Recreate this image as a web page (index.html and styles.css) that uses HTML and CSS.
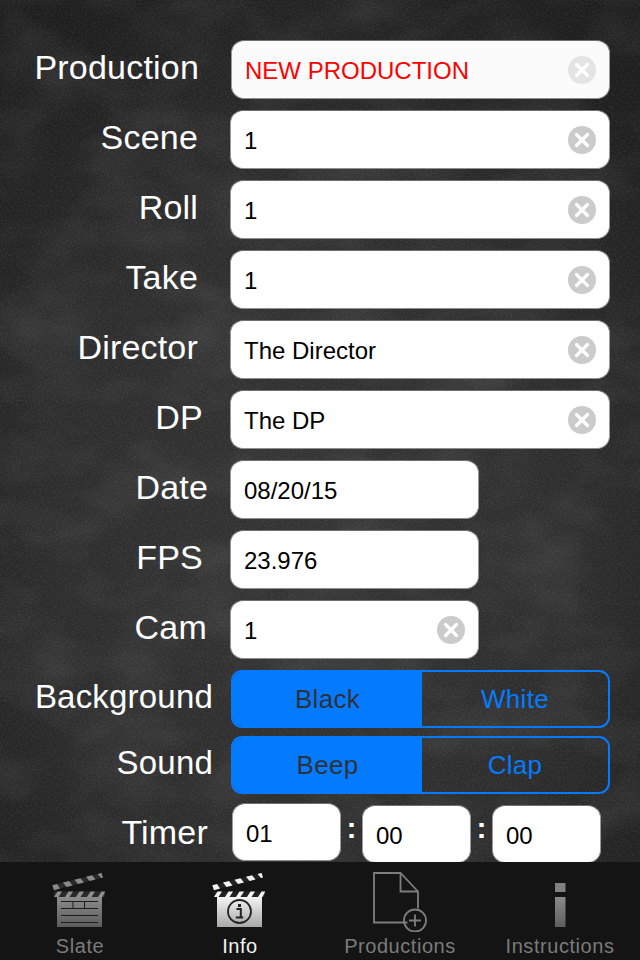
FILE: index.html
```html
<!DOCTYPE html>
<html lang="en">
<head>
<meta charset="utf-8">
<title>Slate Info</title>
<link rel="stylesheet" href="styles.css">
</head>
<body>
<div class="screen">
  <svg class="board" width="640" height="862" aria-hidden="true">
    <defs>
      <radialGradient id="vig" cx="50%" cy="62%" r="70%">
        <stop offset="0" stop-color="#343434"/>
        <stop offset="0.6" stop-color="#2d2d2d"/>
        <stop offset="1" stop-color="#1e1e1e"/>
      </radialGradient>
      <filter id="grain" x="0" y="0" width="100%" height="100%">
        <feTurbulence type="fractalNoise" baseFrequency="0.55" numOctaves="3" seed="7"/>
        <feColorMatrix values="0 0 0 0 1  0 0 0 0 1  0 0 0 0 1  0.9 0 0 0 -0.36"/>
      </filter>
      <filter id="smudge" x="0" y="0" width="100%" height="100%">
        <feTurbulence type="fractalNoise" baseFrequency="0.012 0.02" numOctaves="3" seed="3"/>
        <feColorMatrix values="0 0 0 0 1  0 0 0 0 1  0 0 0 0 1  0.7 0 0 0 -0.28"/>
      </filter>
    </defs>
    <rect width="640" height="862" fill="url(#vig)"/>
    <rect width="640" height="862" filter="url(#smudge)" opacity="0.22"/>
    <rect width="640" height="862" filter="url(#grain)" opacity="0.18"/>
  </svg>

  <main class="form">
    <div class="row">
      <label class="label pad-199">Production</label>
      <div class="field field-prod">
        <span class="value value-red">NEW PRODUCTION</span>
        <span class="clear clear-pale"><svg viewBox="0 0 28 28" width="28" height="28"><path d="M8.5 8.5l11 11M19.500 8.500l-11 11"/></svg></span>
      </div>
    </div>
    <div class="row">
      <label class="label pad-198">Scene</label>
      <div class="field"><span class="value">1</span><span class="clear"><svg viewBox="0 0 28 28" width="28" height="28"><path d="M8.5 8.5l11 11M19.500 8.500l-11 11"/></svg></span></div>
    </div>
    <div class="row">
      <label class="label pad-198">Roll</label>
      <div class="field"><span class="value">1</span><span class="clear"><svg viewBox="0 0 28 28" width="28" height="28"><path d="M8.5 8.5l11 11M19.500 8.500l-11 11"/></svg></span></div>
    </div>
    <div class="row">
      <label class="label pad-198">Take</label>
      <div class="field"><span class="value">1</span><span class="clear"><svg viewBox="0 0 28 28" width="28" height="28"><path d="M8.5 8.5l11 11M19.500 8.500l-11 11"/></svg></span></div>
    </div>
    <div class="row">
      <label class="label pad-198">Director</label>
      <div class="field"><span class="value">The Director</span><span class="clear"><svg viewBox="0 0 28 28" width="28" height="28"><path d="M8.5 8.5l11 11M19.500 8.500l-11 11"/></svg></span></div>
    </div>
    <div class="row">
      <label class="label pad-203">DP</label>
      <div class="field"><span class="value">The DP</span><span class="clear"><svg viewBox="0 0 28 28" width="28" height="28"><path d="M8.5 8.5l11 11M19.500 8.500l-11 11"/></svg></span></div>
    </div>
    <div class="row">
      <label class="label pad-208">Date</label>
      <div class="field field-short"><span class="value">08/20/15</span></div>
    </div>
    <div class="row">
      <label class="label pad-203">FPS</label>
      <div class="field field-short"><span class="value">23.976</span></div>
    </div>
    <div class="row">
      <label class="label pad-207">Cam</label>
      <div class="field field-short"><span class="value">1</span><span class="clear"><svg viewBox="0 0 28 28" width="28" height="28"><path d="M8.5 8.5l11 11M19.500 8.500l-11 11"/></svg></span></div>
    </div>
    <div class="row row-seg">
      <label class="label label-seg pad-213">Background</label>
      <div class="segment">
        <span class="seg seg-on">Black</span>
        <span class="seg">White</span>
      </div>
    </div>
    <div class="row row-seg">
      <label class="label label-seg pad-213">Sound</label>
      <div class="segment">
        <span class="seg seg-on">Beep</span>
        <span class="seg">Clap</span>
      </div>
    </div>
    <div class="row row-timer">
      <label class="label label-timer pad-208">Timer</label>
      <div class="timer">
        <div class="field field-time field-time-first"><span class="value">01</span></div>
        <span class="colon">:</span>
        <div class="field field-time"><span class="value">00</span></div>
        <span class="colon">:</span>
        <div class="field field-time"><span class="value">00</span></div>
      </div>
    </div>
  </main>

  <nav class="tabs">
    <div class="tab">
      <svg class="tab-icon" viewBox="0 0 70 66" width="70" height="66" aria-hidden="true">
        <defs>
          <linearGradient id="slateBody" x1="0" y1="0" x2="0" y2="1"><stop offset="0" stop-color="#8c8c8c"/><stop offset="1" stop-color="#5c5c5c"/></linearGradient>
          <linearGradient id="slateTop" x1="0" y1="0" x2="0" y2="1"><stop offset="0" stop-color="#9a9a9a"/><stop offset="1" stop-color="#777"/></linearGradient>
        </defs>
        <polygon points="7.300,19.200 56.600,6.900 58,11.500 9,24.200" fill="#2a2a2a"/>
        <g fill="#8a8a8a">
          <polygon points="7.300,19.200 12,18 15,22.600 9,24.200"/>
          <polygon points="18,16.500 24,15 27.500,19.500 21.500,21"/>
          <polygon points="29.500,13.700 35.500,12.200 39,16.600 33,18"/>
          <polygon points="41,10.800 47,9.300 50.500,13.500 44.500,15"/>
          <polygon points="52.500,8 56.600,6.900 58,11.500 56,12"/>
        </g>
        <rect x="9" y="25.500" width="51" height="5.500" fill="#2a2a2a"/>
        <g fill="#8f8f8f">
          <polygon points="9,31 12.500,25.500 17,25.500 13.500,31"/>
          <polygon points="20,31 23.500,25.500 28,25.500 24.500,31"/>
          <polygon points="31,31 34.500,25.500 39,25.500 35.500,31"/>
          <polygon points="42,31 45.500,25.500 50,25.500 46.500,31"/>
          <polygon points="53,31 56.500,25.500 60,25.500 60,26 57.500,31"/>
        </g>
        <rect x="12" y="31" width="45" height="30" fill="url(#slateBody)"/>
        <path d="M16 35.500h37M16 42.500h37M16 49.500h37M16 56.500h37M28 35.500v7M39.500 35.500v7" stroke="#1c1c1c" stroke-width="1" fill="none"/>
      </svg>
      <span class="tab-label">Slate</span>
    </div>
    <div class="tab tab-on">
      <svg class="tab-icon" viewBox="0 0 70 66" width="70" height="66" aria-hidden="true">
        <defs>
          <linearGradient id="infoBody" x1="0" y1="0" x2="0" y2="1"><stop offset="0" stop-color="#f4f4f4"/><stop offset="1" stop-color="#a8a8a8"/></linearGradient>
        </defs>
        <polygon points="7.300,19.200 56.600,6.900 58,11.500 9,24.200" fill="#222"/>
        <g fill="#f2f2f2">
          <polygon points="7.300,19.200 12,18 15,22.600 9,24.200"/>
          <polygon points="18,16.500 24,15 27.500,19.500 21.500,21"/>
          <polygon points="29.500,13.700 35.500,12.200 39,16.600 33,18"/>
          <polygon points="41,10.800 47,9.300 50.500,13.500 44.500,15"/>
          <polygon points="52.500,8 56.600,6.900 58,11.500 56,12"/>
        </g>
        <rect x="9" y="25.500" width="51" height="5.500" fill="#222"/>
        <g fill="#f5f5f5">
          <polygon points="9,31 12.500,25.500 17,25.500 13.500,31"/>
          <polygon points="20,31 23.500,25.500 28,25.500 24.500,31"/>
          <polygon points="31,31 34.500,25.500 39,25.500 35.500,31"/>
          <polygon points="42,31 45.500,25.500 50,25.500 46.500,31"/>
          <polygon points="53,31 56.500,25.500 60,25.500 60,26 57.500,31"/>
        </g>
        <rect x="12" y="31" width="45" height="30" fill="url(#infoBody)"/>
        <circle cx="34.500" cy="45.500" r="11.500" fill="none" stroke="#222" stroke-width="1.800"/>
        <path d="M31.500 43h4.300v8.500M30.800 51.500h7.400" fill="none" stroke="#222" stroke-width="2"/>
        <rect x="33" y="38" width="3" height="3" fill="#222"/>
      </svg>
      <span class="tab-label">Info</span>
    </div>
    <div class="tab">
      <svg class="tab-icon" viewBox="0 0 70 66" width="70" height="66" aria-hidden="true">
        <path d="M42.500 56.500H9V7h26.500L53 25.500v17" fill="none" stroke="#7d7d7d" stroke-width="1.800"/>
        <path d="M35.500 7v18.500H53" fill="none" stroke="#7d7d7d" stroke-width="1.800"/>
        <circle cx="50" cy="54.500" r="11" fill="none" stroke="#7d7d7d" stroke-width="1.800"/>
        <path d="M44 54.500h12M50 48.500v12" fill="none" stroke="#7d7d7d" stroke-width="1.800"/>
      </svg>
      <span class="tab-label">Productions</span>
    </div>
    <div class="tab">
      <svg class="tab-icon" viewBox="0 0 70 66" width="70" height="66" aria-hidden="true">
        <defs>
          <linearGradient id="iBar" x1="0" y1="0" x2="0" y2="1"><stop offset="0" stop-color="#8a8a8a"/><stop offset="1" stop-color="#5e5e5e"/></linearGradient>
        </defs>
        <rect x="30" y="17" width="10.500" height="9" fill="#808080"/>
        <rect x="30" y="31" width="10.500" height="30" fill="url(#iBar)"/>
      </svg>
      <span class="tab-label">Instructions</span>
    </div>
  </nav>
</div>
</body>
</html>
```

FILE: styles.css
```css
* {
  box-sizing: border-box;
}

html,
body {
  margin: 0;
  padding: 0;
}

body {
  background: #141414;
  font-family: "Liberation Sans", Arial, sans-serif;
}

.screen {
  position: relative;
  width: 640px;
  height: 960px;
  overflow: hidden;
  display: flex;
  flex-direction: column;
}

.board {
  position: absolute;
  left: 0;
  top: 0;
}

.form {
  position: relative;
  height: 862px;
  padding-top: 40px;
  overflow: hidden;
  display: flex;
  flex-direction: column;
  flex: none;
}

.row {
  display: flex;
  height: 58px;
  margin-bottom: 12px;
  flex: none;
}

.row-seg {
  margin-bottom: 8px;
}

.row-timer {
  height: 60px;
  margin-bottom: 0;
  margin-top: 1px;
}

.label {
  width: 230px;
  flex: none;
  text-align: right;
  color: #fff;
  font-size: 34px;
  line-height: 54px;
  letter-spacing: 0.2px;
}

.label-seg {
  font-size: 33px;
  line-height: 53px;
}

.label-timer {
  line-height: 58px;
}

.pad-198 { padding-right: 32px; }
.pad-199 { padding-right: 31px; }
.pad-203 { padding-right: 27px; }
.pad-207 { padding-right: 23px; }
.pad-208 { padding-right: 22px; }
.pad-213 { padding-right: 17px; }

.field {
  width: 380px;
  height: 59px;
  display: flex;
  align-items: center;
  justify-content: space-between;
  padding: 0 13px;
  background: #fff;
  border-radius: 13px;
  border: 1px solid #8a8a8a;
  border-width: 1px 1px 1px 1px;
  border-color: #6f6f6f #9a9a9a #8f8f8f #9a9a9a;
}

.field-prod {
  width: 379px;
  margin-left: 1px;
  background: #fbfbfb;
}

.field-short {
  width: 249px;
}

.value {
  font-size: 24px;
  line-height: 28px;
  color: #000;
  padding-top: 3px;
}

.value-red {
  color: #fe0000;
}

.clear {
  width: 28px;
  height: 28px;
  border-radius: 50%;
  background: #cbcbcb;
  flex: none;
  margin-right: 0;
}

.clear-pale {
  background: #e4e4e4;
}

.clear svg {
  display: block;
}

.clear path {
  fill: none;
  stroke: #fff;
  stroke-width: 3.200;
  stroke-linecap: round;
}

.segment {
  width: 379px;
  height: 58px;
  margin-left: 1px;
  display: flex;
  border: 2px solid #047bfe;
  border-radius: 11px;
  overflow: hidden;
}

.seg {
  flex: 1;
  display: flex;
  align-items: center;
  justify-content: center;
  color: #047bfe;
  font-size: 26px;
  letter-spacing: 0.3px;
}

.seg-on {
  flex: none;
  width: 189px;
  background: #047bfe;
  color: #2e3138;
}

.timer {
  display: flex;
  align-items: flex-start;
}

.field-time {
  width: 109px;
  height: 58px;
  margin-top: 2px;
  padding: 0 13px;
  justify-content: flex-start;
}

.field-time-first {
  margin-top: 0;
  margin-left: 2px;
}

.colon {
  width: 21px;
  text-align: center;
  color: #fff;
  font-size: 30px;
  font-weight: bold;
  line-height: 50px;
}

.tabs {
  height: 98px;
  flex: none;
  display: grid;
  grid-template-columns: repeat(4, 160px);
  background: #141414;
}

.tab {
  display: flex;
  flex-direction: column;
  align-items: center;
  color: #7b7b7b;
}

.tab-icon {
  display: block;
  flex: none;
  margin-top: 4px;
  margin-left: -1px;
}

.tab-label {
  font-size: 20px;
  line-height: 24px;
  margin-top: 2px;
  letter-spacing: 0.55px;
  white-space: nowrap;
}

.tab-on {
  color: #f2f2f2;
}
```
